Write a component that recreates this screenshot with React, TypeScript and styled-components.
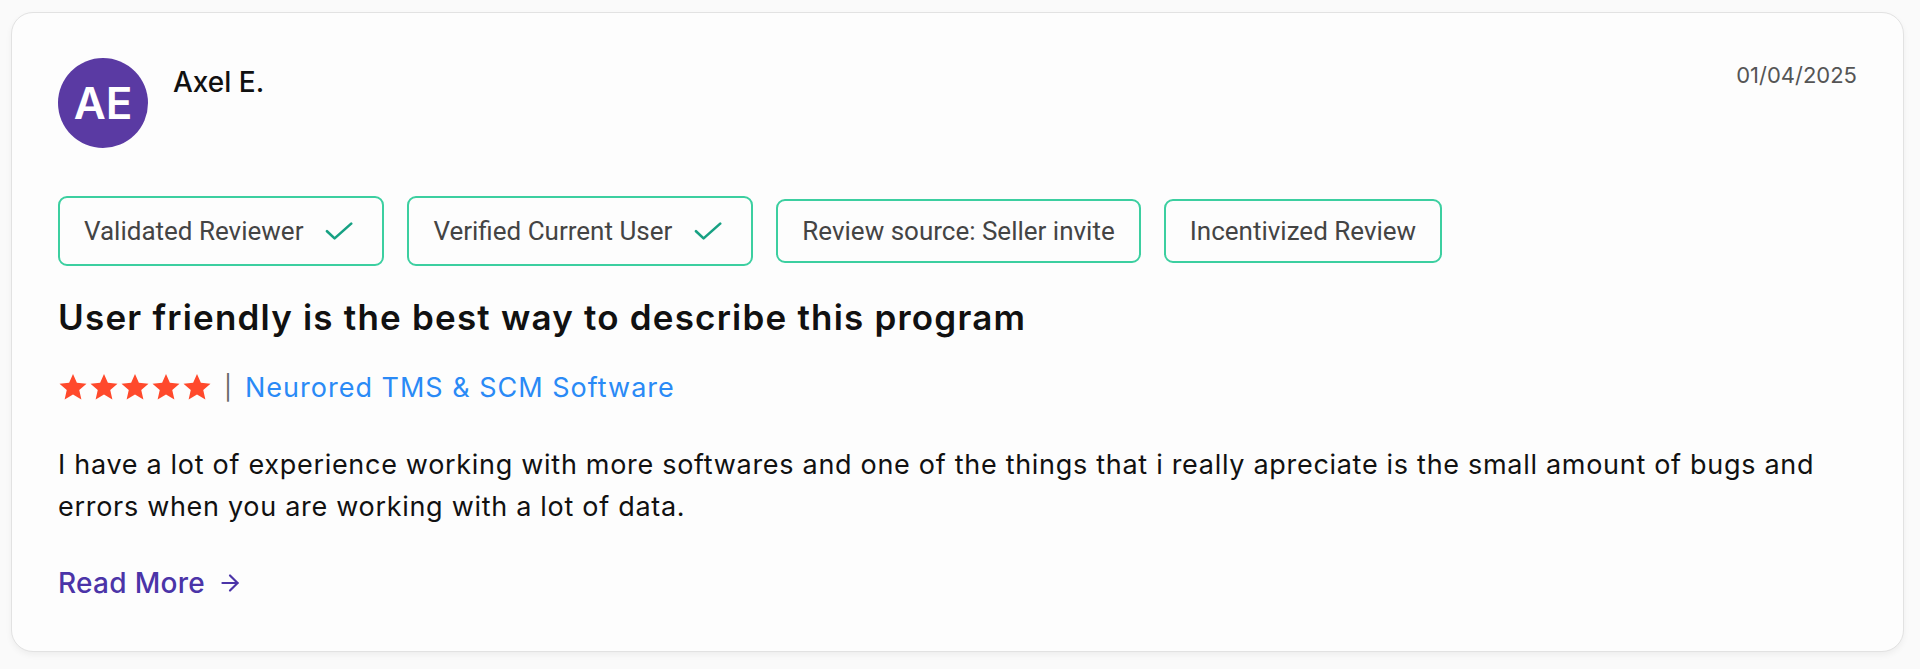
import styled, { createGlobalStyle } from "styled-components";
import { ArrowRight } from "lucide-react";

const GlobalStyle = createGlobalStyle`
  body {
    margin: 0;
    background: #fafafa;
    font-family: "Inter", "Liberation Sans", sans-serif;
  }
`;

const Page = styled.div`
  padding: 12px 16px 16px 11px;
`;

const Card = styled.article`
  background: #fdfdfd;
  border: 1.5px solid #e2e2e2;
  border-radius: 22px;
  box-shadow: 0 3px 6px rgba(0, 0, 0, 0.05);
  padding: 45px 46px 50px 46px;
`;

const Header = styled.div`
  display: flex;
  align-items: flex-start;
`;

const Avatar = styled.div`
  width: 90px;
  height: 90px;
  border-radius: 50%;
  background: #5a3aa3;
  color: #fff;
  display: flex;
  align-items: center;
  justify-content: center;
  font-size: 44px;
  font-weight: 600;
  flex-shrink: 0;
`;

const Name = styled.div`
  margin-left: 25px;
  margin-top: 7px;
  font-size: 28px;
  line-height: 34px;
  font-weight: 500;
  color: #111;
  flex: 1;
`;

const DateText = styled.div`
  margin-top: 4px;
  font-size: 22px;
  line-height: 26px;
  color: #555;
`;

const Badges = styled.div`
  display: flex;
  align-items: center;
  gap: 23px;
  margin-top: 48px;
`;

const Badge = styled.div`
  display: flex;
  align-items: center;
  gap: 22px;
  border: 2px solid #3ccfa0;
  border-radius: 9px;
  padding: 15px 24px;
  font-family: "Roboto", "Liberation Sans", sans-serif;
  font-size: 26px;
  line-height: 30px;
  color: #444;
`;

const CheckMark = styled.svg`
  width: 28px;
  height: 36px;
  margin-right: 5px;
  color: #17a183;
`;

const Title = styled.h2`
  margin: 29px 0 0;
  font-size: 35px;
  line-height: 44px;
  letter-spacing: 1.2px;
  font-weight: 600;
  color: #111;
`;

const RatingRow = styled.div`
  display: flex;
  align-items: center;
  margin-top: 30px;
  height: 36px;
`;

const Stars = styled.div`
  display: flex;
  gap: 1px;
`;

const Divider = styled.span`
  margin: 0 13px 0 12px;
  font-size: 24px;
  color: #666;
`;

const ProductLink = styled.a`
  color: #2a8af6;
  font-size: 27px;
  letter-spacing: 1px;
  text-decoration: none;
`;

const Body = styled.p`
  margin: 39px 0 0;
  font-size: 27px;
  line-height: 42px;
  letter-spacing: 0.7px;
  color: #111;
`;

const ReadMore = styled.a`
  display: inline-flex;
  align-items: center;
  gap: 12px;
  margin-top: 37px;
  line-height: 36px;
  font-size: 28px;
  font-weight: 500;
  letter-spacing: 0.3px;
  color: #4b34a8;
  text-decoration: none;
`;

function Star() {
  return (
    <svg width="30" height="30" viewBox="0 0 24 24">
      <path
        d="M12 1.5l3.1 7.1 7.7.7-5.8 5.1 1.7 7.6L12 18l-6.7 4 1.7-7.6-5.8-5.1 7.7-.7z"
        fill="#ff492c"
      />
    </svg>
  );
}

function Check() {
  return (
    <CheckMark viewBox="0 -9 28 36" fill="none">
      <path
        d="M2 9.2 9.6 16.4 26.2 1.6"
        stroke="currentColor"
        strokeWidth="2.6"
        strokeLinecap="round"
        strokeLinejoin="round"
      />
    </CheckMark>
  );
}

const badges = [
  { label: "Validated Reviewer", checked: true },
  { label: "Verified Current User", checked: true },
  { label: "Review source: Seller invite", checked: false },
  { label: "Incentivized Review", checked: false },
];

export default function App() {
  return (
    <>
      <GlobalStyle />
      <Page>
        <Card>
          <Header>
            <Avatar>AE</Avatar>
            <Name>Axel E.</Name>
            <DateText>01/04/2025</DateText>
          </Header>
          <Badges>
            {badges.map((b) => (
              <Badge key={b.label}>
                {b.label}
                {b.checked && <Check />}
              </Badge>
            ))}
          </Badges>
          <Title>User friendly is the best way to describe this program</Title>
          <RatingRow>
            <Stars>
              {[0, 1, 2, 3, 4].map((i) => (
                <Star key={i} />
              ))}
            </Stars>
            <Divider>|</Divider>
            <ProductLink href="#">Neurored TMS &amp; SCM Software</ProductLink>
          </RatingRow>
          <Body>
            I have a lot of experience working with more softwares and one of the things that i
            really apreciate is the small amount of bugs and errors when you are working with a lot
            of data.
          </Body>
          <ReadMore href="#">
            Read More <ArrowRight size={26} strokeWidth={2} />
          </ReadMore>
        </Card>
      </Page>
    </>
  );
}
